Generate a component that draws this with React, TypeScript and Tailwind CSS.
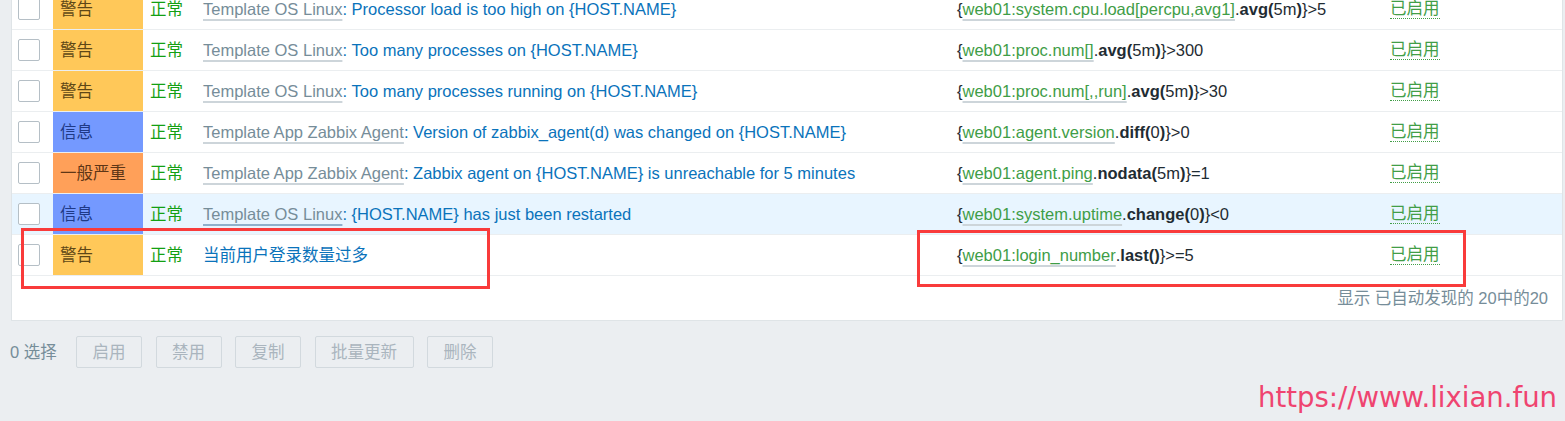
type Part = { t: string; k?: "link" | "bold" };

type Trigger = {
  sev: "warn" | "info" | "avg";
  template?: string;
  name: string;
  expr: Part[];
  hover?: boolean;
};

const sevStyle = {
  warn: { label: "警告", cls: "bg-[#ffc859] text-[#5e4716]" },
  info: { label: "信息", cls: "bg-[#7499ff] text-[#1f3a86]" },
  avg: { label: "一般严重", cls: "bg-[#ffa059] text-[#5e3616]" },
};

const triggers: Trigger[] = [
  {
    sev: "warn",
    template: "Template OS Linux",
    name: "Processor load is too high on {HOST.NAME}",
    expr: [
      { t: "{" },
      { t: "web01:system.cpu.load[percpu,avg1]", k: "link" },
      { t: "." },
      { t: "avg(", k: "bold" },
      { t: "5m" },
      { t: ")", k: "bold" },
      { t: "}>5" },
    ],
  },
  {
    sev: "warn",
    template: "Template OS Linux",
    name: "Too many processes on {HOST.NAME}",
    expr: [
      { t: "{" },
      { t: "web01:proc.num[]", k: "link" },
      { t: "." },
      { t: "avg(", k: "bold" },
      { t: "5m" },
      { t: ")", k: "bold" },
      { t: "}>300" },
    ],
  },
  {
    sev: "warn",
    template: "Template OS Linux",
    name: "Too many processes running on {HOST.NAME}",
    expr: [
      { t: "{" },
      { t: "web01:proc.num[,,run]", k: "link" },
      { t: "." },
      { t: "avg(", k: "bold" },
      { t: "5m" },
      { t: ")", k: "bold" },
      { t: "}>30" },
    ],
  },
  {
    sev: "info",
    template: "Template App Zabbix Agent",
    name: "Version of zabbix_agent(d) was changed on {HOST.NAME}",
    expr: [
      { t: "{" },
      { t: "web01:agent.version", k: "link" },
      { t: "." },
      { t: "diff(", k: "bold" },
      { t: "0" },
      { t: ")", k: "bold" },
      { t: "}>0" },
    ],
  },
  {
    sev: "avg",
    template: "Template App Zabbix Agent",
    name: "Zabbix agent on {HOST.NAME} is unreachable for 5 minutes",
    expr: [
      { t: "{" },
      { t: "web01:agent.ping", k: "link" },
      { t: "." },
      { t: "nodata(", k: "bold" },
      { t: "5m" },
      { t: ")", k: "bold" },
      { t: "}=1" },
    ],
  },
  {
    sev: "info",
    template: "Template OS Linux",
    name: "{HOST.NAME} has just been restarted",
    hover: true,
    expr: [
      { t: "{" },
      { t: "web01:system.uptime", k: "link" },
      { t: "." },
      { t: "change(", k: "bold" },
      { t: "0" },
      { t: ")", k: "bold" },
      { t: "}<0" },
    ],
  },
  {
    sev: "warn",
    name: "当前用户登录数量过多",
    expr: [
      { t: "{" },
      { t: "web01:login_number", k: "link" },
      { t: "." },
      { t: "last()", k: "bold" },
      { t: "}>=5" },
    ],
  },
];

function Row({ tr }: { tr: Trigger }) {
  const sev = sevStyle[tr.sev];
  return (
    <div
      className={`grid grid-cols-[41px_90px_60px_754px_433px_1fr] h-[41px] border-b border-[#ebeef0] ${
        tr.hover ? "bg-[#e8f5ff]" : ""
      }`}
    >
      <div className="flex items-center pl-[6px]">
        <span className="block w-[22px] h-[22px] rounded-[2px] border border-[#b5bfc6] bg-white" />
      </div>
      <div className={`flex items-center pl-[7px] ${sev.cls}`}>{sev.label}</div>
      <div className="flex items-center pl-[7px] text-[#13a013]">正常</div>
      <div className="flex items-center text-[#0a73bb] whitespace-nowrap">
        {tr.template && (
          <>
            <span
              className={`text-[#768d99] underline decoration-[1.5px] underline-offset-[4px] ${
                tr.hover ? "decoration-[#8fb0cc]" : "decoration-[#cdd5da]"
              }`}
            >
              {tr.template}
            </span>
            <span>:&nbsp;</span>
          </>
        )}
        <span>{tr.name}</span>
      </div>
      <div className="flex items-center text-[#1f2c33] whitespace-nowrap">
        {tr.expr.map((p, i) =>
          p.k === "link" ? (
            <span
              key={i}
              className="text-[#3f9d47] underline decoration-[1.5px] decoration-[#cdd5da] underline-offset-[4px]"
            >
              {p.t}
            </span>
          ) : p.k === "bold" ? (
            <b key={i} className="font-bold">
              {p.t}
            </b>
          ) : (
            <span key={i}>{p.t}</span>
          )
        )}
      </div>
      <div className="flex items-center">
        <span className="text-[#429e47] border-b border-dotted border-[#429e47] leading-[19px]">
          已启用
        </span>
      </div>
    </div>
  );
}

export default function App() {
  const actions = [
    { label: "启用", w: "w-[66px]" },
    { label: "禁用", w: "w-[66px]" },
    { label: "复制", w: "w-[66px]" },
    { label: "批量更新", w: "w-[99px]" },
    { label: "删除", w: "w-[66px]" },
  ];

  return (
    <div
      className="relative h-[421px] overflow-hidden bg-[#ebeef1] text-[16.5px]"
      style={{ fontFamily: '"Liberation Sans", Arial, "Noto Sans CJK SC", sans-serif' }}
    >
      <div className="-mt-[11px] ml-[11px] mr-[2px] bg-white border-x border-b border-[#dfe4e7]">
        {triggers.map((tr, i) => (
          <Row key={i} tr={tr} />
        ))}
        <div className="h-[44px] flex items-center justify-end pr-[14px] text-[#768d99]">
          显示 已自动发现的 20中的20
        </div>
      </div>

      <div className="mt-[15px] flex items-center pl-[10px]">
        <span className="w-[66px] text-[#768d99]">0 选择</span>
        <div className="flex gap-[13.5px]">
          {actions.map((a) => (
            <button
              key={a.label}
              className={`${a.w} h-[32px] rounded-[2px] border border-[#d2d9de] bg-[#ebeef1] text-[#aab5be]`}
            >
              {a.label}
            </button>
          ))}
        </div>
      </div>

      {/* screenshot annotations */}
      <div className="absolute left-[21px] top-[228px] w-[469px] h-[61px] border-[3px] border-[#f93b3b]" />
      <div className="absolute left-[917px] top-[230px] w-[549px] h-[57px] border-[3px] border-[#f93b3b]" />

      <div
        className="absolute right-[8px] top-[384px] text-[27.5px] leading-none text-[#ef4470]"
        style={{ fontFamily: '"DejaVu Sans", Verdana, sans-serif' }}
      >
        https://www.lixian.fun
      </div>
    </div>
  );
}
